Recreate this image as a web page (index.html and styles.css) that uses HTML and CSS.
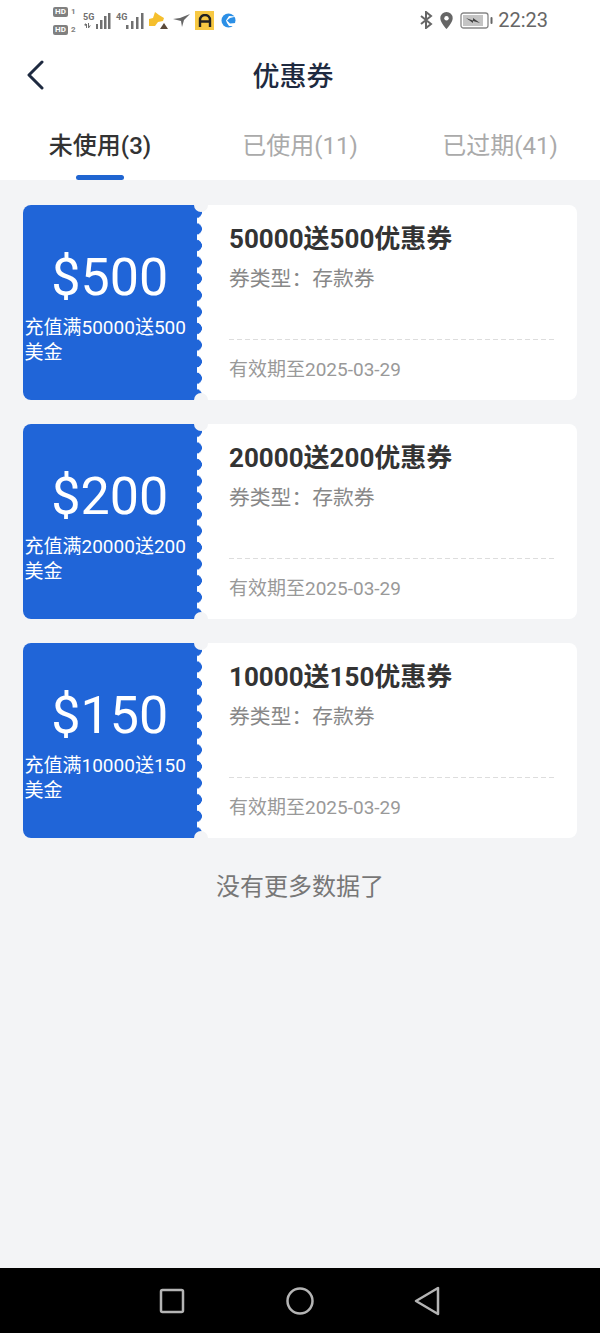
FILE: index.html
```html
<!DOCTYPE html>
<html lang="zh-CN">
<head>
    <meta charset="UTF-8">
    <meta content="width=device-width, initial-scale=1.0" name="viewport">
    <title>优惠券</title>
    <link rel="stylesheet" href="styles.css">
</head>
<body>

<!-- Status bar -->
<div class="status-bar">
    <div class="status-left">
        <div class="hd-stack">
            <div class="hd-row"><span class="hd-badge">HD</span><span class="hd-num">1</span></div>
            <div class="hd-row"><span class="hd-badge">HD</span><span class="hd-num">2</span></div>
        </div>
        <div class="signal">
            <span class="signal-label">5G</span>
            <svg class="bars-5g" width="28" height="18" viewBox="0 0 28 18" fill="#707070">
                <path d="M1 13l2-2v1h1v4H3v-2zM5 16v-5h1v3l2-1-2 3z"/>
                <rect x="13" y="12" width="2" height="5"/>
                <rect x="17" y="8" width="2.500" height="9"/>
                <rect x="21" y="4" width="2.500" height="13"/>
                <rect x="25" y="1" width="2.500" height="16"/>
            </svg>
        </div>
        <div class="signal">
            <span class="signal-label">4G</span>
            <svg width="18" height="18" viewBox="0 0 18 18" fill="#707070">
                <rect x="0" y="13" width="2.500" height="4"/>
                <rect x="5" y="9" width="2.500" height="8"/>
                <rect x="10" y="5" width="2.500" height="12"/>
                <rect x="15" y="1" width="2.500" height="16"/>
            </svg>
        </div>
        <svg class="app-icon" width="20" height="20" viewBox="0 0 20 20">
            <path d="M0 9l4-1 2-6 4 3 5 3-1 3-5 1-3 4H0z" fill="#f5bf2e"/>
            <path d="M11 19l4-6 4 6z" fill="#5a4a3a"/>
        </svg>
        <svg class="app-icon" width="18" height="16" viewBox="0 0 18 16">
            <path d="M0 7l7-1 10-4-6 6-2 7-1-6z" fill="#666"/>
        </svg>
        <div class="app-tile">
            <svg width="14" height="13" viewBox="0 0 14 13" fill="none" stroke="#222" stroke-width="2.400">
                <path d="M2 13V6a5 5 0 0 1 10 0v7M2 7.500h10"/>
            </svg>
        </div>
        <svg class="app-icon" width="15" height="15" viewBox="0 0 15 15">
            <circle cx="7.500" cy="7.500" r="7" fill="#2b8fe6"/>
            <path d="M15 3.500L9 5 6 7.500l3 3 6-.5-1 3H8L6 10 5 7.500 8 3z" fill="#fff"/>
        </svg>
    </div>
    <div class="status-right">
        <svg width="13" height="18" viewBox="0 0 13 18" fill="none" stroke="#666" stroke-width="2">
            <path d="M1 5l10 8-5 4V1l5 4-10 8"/>
        </svg>
        <svg width="13" height="17" viewBox="0 0 13 17">
            <path d="M6.500 0a6.200 6.200 0 0 1 6.200 6.200C12.700 10.500 6.500 17 6.500 17S.3 10.500.3 6.200A6.200 6.200 0 0 1 6.500 0z" fill="#666"/>
            <circle cx="6.500" cy="6.200" r="2.200" fill="#fff"/>
        </svg>
        <svg class="battery" width="33" height="17" viewBox="0 0 33 17">
            <rect x="1" y="1" width="27" height="15" rx="2.500" fill="#fff" stroke="#888" stroke-width="1.300"/>
            <rect x="3" y="3" width="20" height="11" fill="#c4c4c4"/>
            <path d="M6 6l7 2.500V6l7 5-7-2v2z" fill="#444"/>
            <rect x="30.500" y="5" width="2" height="7" rx="1" fill="#666"/>
        </svg>
        <span class="clock">22:23</span>
    </div>
</div>

<!-- Header -->
<div class="header">
    <svg class="back-icon" width="20" height="30" viewBox="0 0 20 30" fill="none" stroke="#1e2a40" stroke-width="3" stroke-linecap="round" stroke-linejoin="round">
        <path d="M16 2L3 15l13 13"/>
    </svg>
    <h1>优惠券</h1>
</div>

<!-- Tabs -->
<div class="tabs">
    <div class="tab active">未使用(3)</div>
    <div class="tab">已使用(11)</div>
    <div class="tab">已过期(41)</div>
</div>

<!-- Coupon list -->
<div class="content">
    <div class="coupon">
        <div class="coupon-left">
            <div class="price">$500</div>
            <div class="price-note">充值满50000送500美金</div>
        </div>
        <div class="coupon-main">
            <div class="coupon-title">50000送500优惠券</div>
            <div class="coupon-type">券类型：存款券</div>
            <div class="coupon-date">有效期至2025-03-29</div>
        </div>
    </div>
    <div class="coupon">
        <div class="coupon-left">
            <div class="price">$200</div>
            <div class="price-note">充值满20000送200美金</div>
        </div>
        <div class="coupon-main">
            <div class="coupon-title">20000送200优惠券</div>
            <div class="coupon-type">券类型：存款券</div>
            <div class="coupon-date">有效期至2025-03-29</div>
        </div>
    </div>
    <div class="coupon">
        <div class="coupon-left">
            <div class="price">$150</div>
            <div class="price-note">充值满10000送150美金</div>
        </div>
        <div class="coupon-main">
            <div class="coupon-title">10000送150优惠券</div>
            <div class="coupon-type">券类型：存款券</div>
            <div class="coupon-date">有效期至2025-03-29</div>
        </div>
    </div>
    <div class="no-more">没有更多数据了</div>
</div>

<!-- Android navigation bar -->
<div class="nav-bar">
    <svg width="26" height="26" viewBox="0 0 26 26" fill="none" stroke="#b4b4b4" stroke-width="2.500">
        <rect x="2" y="2" width="22" height="22" rx="1.500"/>
    </svg>
    <svg width="28" height="28" viewBox="0 0 28 28" fill="none" stroke="#b4b4b4" stroke-width="2.500">
        <circle cx="14" cy="14" r="12.500"/>
    </svg>
    <svg width="26" height="30" viewBox="0 0 26 30" fill="none" stroke="#b4b4b4" stroke-width="2.500" stroke-linejoin="round">
        <path d="M24 2v26L2 15z"/>
    </svg>
</div>

</body>
</html>
```

FILE: styles.css
```css
* {
    box-sizing: border-box;
}
body {
    margin: 0;
    height: 1333px;
    display: flex;
    flex-direction: column;
    font-family: Roboto, "Noto Sans CJK SC", sans-serif;
    background-color: #f3f4f6;
}

/* status bar */
.status-bar {
    height: 40px;
    padding: 4px 52px 4px 53px;
    display: flex;
    justify-content: space-between;
    align-items: flex-start;
    background-color: #fff;
}
.status-left {
    display: flex;
    align-items: center;
    height: 32px;
}
.status-right {
    display: flex;
    align-items: center;
    gap: 7px;
    height: 32px;
}
.hd-stack {
    width: 30px;
    margin-top: 2px;
    display: flex;
    flex-direction: column;
    gap: 8px;
}
.hd-row {
    display: flex;
    align-items: center;
    gap: 3px;
}
.hd-badge {
    width: 15px;
    height: 10px;
    border-radius: 2px;
    background-color: #808080;
    color: #fff;
    font-size: 8px;
    font-weight: 700;
    line-height: 10px;
    text-align: center;
}
.hd-num {
    font-size: 8px;
    line-height: 10px;
    font-weight: 700;
    color: #808080;
}
.signal {
    display: flex;
    align-items: flex-start;
    margin-right: 5px;
}
.signal-label {
    width: 10px;
    font-size: 9px;
    line-height: 10px;
    font-weight: 700;
    color: #707070;
    margin-top: 2px;
}
.signal svg {
    margin-top: 2px;
}
.signal .bars-5g {
    margin-left: -10px;
}
.app-icon {
    margin-right: 4px;
}
.app-tile {
    width: 19px;
    height: 19px;
    margin-right: 7px;
    display: flex;
    align-items: center;
    justify-content: center;
    background-color: #f7c843;
}
.clock {
    font-size: 20px;
    color: #666;
    margin-left: -2px;
}

/* header */
.header {
    height: 72px;
    padding-left: 26px;
    display: flex;
    align-items: center;
    position: relative;
    background-color: #fff;
}
.back-icon {
    margin-top: -2px;
}
.header h1 {
    position: absolute;
    left: 0;
    right: 14px;
    margin: -3px 0 0;
    font-size: 27px;
    font-weight: 500;
    color: #1e2a40;
    text-align: center;
}

/* tabs */
.tabs {
    height: 68px;
    padding-top: 17px;
    display: flex;
    background-color: #fff;
}
.tab {
    flex: 1;
    display: flex;
    flex-direction: column;
    align-items: center;
    font-size: 24px;
    line-height: 34px;
    color: #aaa;
}
.tab.active {
    color: #333;
    font-weight: 500;
}
.tab.active::after {
    content: "";
    width: 48px;
    height: 5px;
    margin-top: 12px;
    border-radius: 3px;
    background-color: #2065d1;
}

/* coupons */
.content {
    flex: 1;
    padding: 25px 23px 0;
    display: flex;
    flex-direction: column;
    gap: 24px;
}
.coupon {
    height: 195px;
    display: flex;
    border-radius: 8px;
    overflow: hidden;
    background-color: #fff;
}
.coupon-left {
    width: 179px;
    padding: 43px 7px 0 1.500px;
    position: relative;
    flex-shrink: 0;
    color: #fff;
    background-color: #2065d8;
}
/* rounded teeth down the perforated edge */
.coupon-left::after {
    content: "";
    position: absolute;
    top: 0;
    bottom: 0;
    right: 0;
    width: 5px;
    background: #fff radial-gradient(circle at -1px 50%, #2065d8 5.600px, transparent 6.100px) 0 -1px / 5px 16.600px repeat-y;
}
.price {
    font-size: 52px;
    line-height: 60px;
    text-align: center;
}
.price-note {
    margin-top: 7px;
    font-size: 19px;
    line-height: 25px;
}
.coupon-main {
    flex: 1;
    padding: 16px 23px 0 27px;
    position: relative;
}
/* grey notches where the stub meets the body */
.coupon-main::before,
.coupon-main::after {
    content: "";
    position: absolute;
    left: -8px;
    width: 14px;
    height: 14px;
    border-radius: 50%;
    background-color: #f3f4f6;
}
.coupon-main::before {
    top: -7px;
}
.coupon-main::after {
    bottom: -7px;
}
.coupon-title {
    font-size: 26px;
    font-weight: 700;
    line-height: 36px;
    color: #333;
}
.coupon-type {
    margin-top: 5px;
    height: 60px;
    font-size: 20.800px;
    line-height: 34px;
    color: #888;
}
.coupon-date {
    margin-top: 17px;
    padding-top: 17px;
    background: repeating-linear-gradient(90deg, #ddd 0 5px, transparent 5px 8px) top / 100% 1px no-repeat;
    font-size: 19px;
    line-height: 28px;
    color: #999;
}
.no-more {
    margin-top: 8px;
    font-size: 24px;
    line-height: 34px;
    color: #777;
    text-align: center;
}

/* navigation bar */
.nav-bar {
    height: 65px;
    padding: 0 160px 0 159px;
    display: flex;
    justify-content: space-between;
    align-items: center;
    background-color: #000;
}
```
